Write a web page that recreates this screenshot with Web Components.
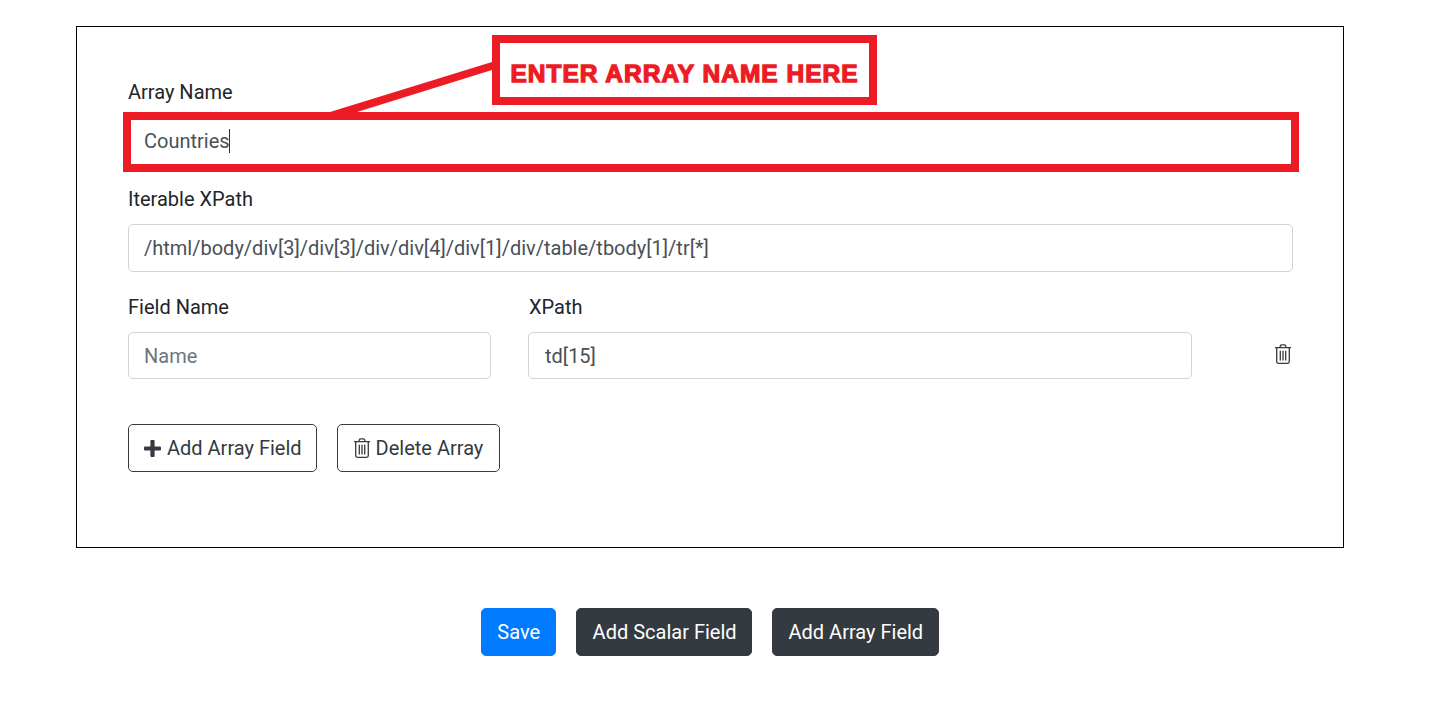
<!DOCTYPE html>
<html><head><meta charset="utf-8">
<style>
html,body{margin:0;background:#fff}
body{font-family:Roboto,"Liberation Sans",sans-serif;font-size:20px;line-height:30px;color:#212529}
.page{width:1420px;height:715px;position:relative;overflow:hidden}
</style></head><body>
<script>
const define=(n,html)=>customElements.define(n,class extends HTMLElement{connectedCallback(){if(!this.shadowRoot)this.attachShadow({mode:'open'}).innerHTML=html(this)}});
define('x-trash',()=>`<style>:host{display:inline-flex;color:#343a40}svg{display:block;width:18px;height:20px}</style><svg viewBox="0 0 18 20" fill="none" stroke="currentColor" stroke-width="1.3"><path d="M1 3.700h16M6.200 3.500V2.200q0-1.400 1.400-1.400h2.800q1.400 0 1.400 1.400v1.300M2.700 3.700V17.600q0 1.700 1.700 1.700h9.200q1.700 0 1.700-1.700V3.700M6.300 6.700v9.800M9 6.700v9.800M11.700 6.700v9.800"/></svg>`);
define('x-plus',()=>`<style>:host{display:inline-flex;color:#343a40}svg{display:block;width:17px;height:17px}</style><svg viewBox="0 0 17 17" fill="currentColor"><rect x="0" y="6.400" width="17" height="4.200" rx="1"/><rect x="6.400" y="0" width="4.200" height="17" rx="1"/></svg>`);
define('x-field',el=>{
 const v=el.getAttribute('value'),p=el.getAttribute('placeholder'),c=el.hasAttribute('caret'),l=el.getAttribute('label');
 return `<style>:host{display:block;margin-bottom:var(--mb,20px)}
 label{display:block;margin-bottom:10px;height:30px;padding-left:var(--tx,0)}
 .in{box-sizing:border-box;height:var(--h,48px);border:1px solid #ced4da;border-radius:5px;padding:0 15px 0 calc(15px + var(--tx,0px));display:flex;align-items:center;color:#495057;background:#fff;white-space:nowrap}
 .ph{color:#6c757d}.caret{display:inline-block;width:1px;height:24px;background:#333;margin-left:-1px}</style>
 ${l?`<label>${l}</label>`:''}<div class="in">${v?`<span>${v}</span>`:`<span class="ph">${p}</span>`}${c?'<i class="caret"></i>':''}</div>`});
define('x-btn',el=>{
 const k=el.getAttribute('kind');
 const st={primary:'background:#007bff;color:#fff;border-color:#007bff',dark:'background:#343a40;color:#fff;border-color:#343a40',outline:'background:#fff;color:#343a40;border-color:#343a40'}[k];
 return `<style>:host{display:inline-block}div{box-sizing:border-box;height:48px;border:1px solid;border-radius:5px;padding:0 var(--pr,15px) 0 var(--pl,15px);display:flex;align-items:center;gap:${el.getAttribute('gap')||4}px;white-space:nowrap;${st}}</style><div><slot></slot></div>`});
define('x-row',()=>`<style>:host{display:grid;grid-template-columns:363px 664px 1fr;column-gap:37px;--h:47px}::slotted(x-trash){justify-self:end;margin:52px 1px 0 0}</style><slot></slot>`);
define('x-actions',()=>`<style>:host{display:flex;gap:20px;margin-top:25px}</style><slot></slot>`);
define('x-card',()=>`<style>:host{display:block;box-sizing:border-box;width:1268px;height:522px;margin:26px 0 0 76px;border:1px solid #000;padding:50px 50px 0 51px;position:relative}</style><slot></slot>`);
define('x-footer',()=>`<style>:host{display:flex;justify-content:center;gap:20px;margin-top:60px}</style><slot></slot>`);
define('x-callout',()=>`<style>:host{position:absolute;left:0;top:0;width:1420px;height:200px;pointer-events:none}
 .box{position:absolute;left:492px;top:35px;width:385px;height:70px;box-sizing:border-box;border:8px solid #ed1c24;background:#fff;display:flex;align-items:center;justify-content:center;padding-top:8px;color:#ed1c24;font:bold 24.500px/1 "Liberation Sans",sans-serif;-webkit-text-stroke:1.3px #ed1c24;letter-spacing:1px;white-space:nowrap}
 .frame{position:absolute;left:123px;top:112px;width:1176px;height:60px;box-sizing:border-box;border:8px solid #ed1c24}
 svg{position:absolute;left:0;top:0}</style>
 <svg width="1420" height="200"><polygon points="330,112 492,62 492,70 357,112" fill="#ed1c24"/></svg>
 <div class="frame"></div><div class="box">ENTER ARRAY NAME HERE</div>`);
</script>
<div class="page">
<x-card>
 <x-field label="Array Name" value="Countries" caret style="--mb:19px"></x-field>
 <x-field label="Iterable XPath" value="/html/body/div[3]/div[3]/div/div[4]/div[1]/div/table/tbody[1]/tr[*]"></x-field>
 <x-row>
  <x-field label="Field Name" placeholder="Name"></x-field>
  <x-field label="XPath" value="td[15]" style="--tx:1px"></x-field>
  <x-trash></x-trash>
 </x-row>
 <x-actions>
  <x-btn kind="outline" gap="6" style="--pr:14px"><x-plus></x-plus>Add Array Field</x-btn>
  <x-btn kind="outline" gap="5" style="--pr:16px"><x-trash></x-trash>Delete Array</x-btn>
 </x-actions>
</x-card>
<x-footer>
 <x-btn kind="primary">Save</x-btn>
 <x-btn kind="dark" style="--pl:15.500px;--pr:14.500px">Add Scalar Field</x-btn>
 <x-btn kind="dark" style="--pl:15.500px;--pr:14.500px">Add Array Field</x-btn>
</x-footer>
<x-callout></x-callout>
</div>
</body></html>
